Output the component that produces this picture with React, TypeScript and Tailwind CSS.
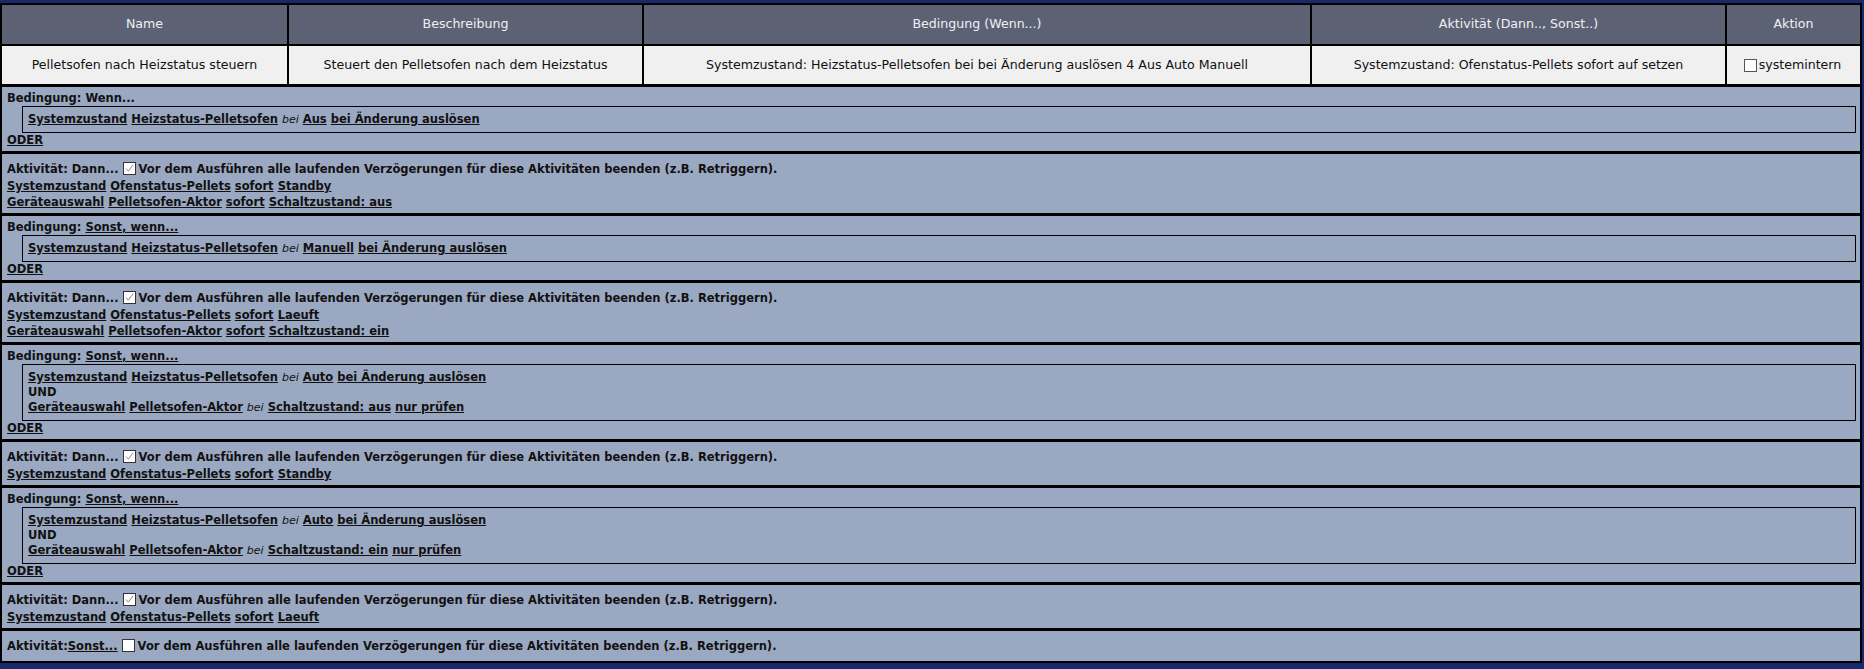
import React from 'react';

type Tok = { t: string; i?: boolean };

const L = (t: string): Tok => ({ t });
const bei: Tok = { t: 'bei', i: true };

type Section =
  | { kind: 'cond'; link?: string; rows: Tok[][] }
  | { kind: 'act'; link?: string; checked: boolean; lines: Tok[][] };

const sections: Section[] = [
  {
    kind: 'cond',
    rows: [[L('Systemzustand'), L('Heizstatus-Pelletsofen'), bei, L('Aus'), L('bei Änderung auslösen')]],
  },
  {
    kind: 'act',
    checked: true,
    lines: [
      [L('Systemzustand'), L('Ofenstatus-Pellets'), L('sofort'), L('Standby')],
      [L('Geräteauswahl'), L('Pelletsofen-Aktor'), L('sofort'), L('Schaltzustand: aus')],
    ],
  },
  {
    kind: 'cond',
    link: 'Sonst, wenn...',
    rows: [[L('Systemzustand'), L('Heizstatus-Pelletsofen'), bei, L('Manuell'), L('bei Änderung auslösen')]],
  },
  {
    kind: 'act',
    checked: true,
    lines: [
      [L('Systemzustand'), L('Ofenstatus-Pellets'), L('sofort'), L('Laeuft')],
      [L('Geräteauswahl'), L('Pelletsofen-Aktor'), L('sofort'), L('Schaltzustand: ein')],
    ],
  },
  {
    kind: 'cond',
    link: 'Sonst, wenn...',
    rows: [
      [L('Systemzustand'), L('Heizstatus-Pelletsofen'), bei, L('Auto'), L('bei Änderung auslösen')],
      [L('Geräteauswahl'), L('Pelletsofen-Aktor'), bei, L('Schaltzustand: aus'), L('nur prüfen')],
    ],
  },
  {
    kind: 'act',
    checked: true,
    lines: [[L('Systemzustand'), L('Ofenstatus-Pellets'), L('sofort'), L('Standby')]],
  },
  {
    kind: 'cond',
    link: 'Sonst, wenn...',
    rows: [
      [L('Systemzustand'), L('Heizstatus-Pelletsofen'), bei, L('Auto'), L('bei Änderung auslösen')],
      [L('Geräteauswahl'), L('Pelletsofen-Aktor'), bei, L('Schaltzustand: ein'), L('nur prüfen')],
    ],
  },
  {
    kind: 'act',
    checked: true,
    lines: [[L('Systemzustand'), L('Ofenstatus-Pellets'), L('sofort'), L('Laeuft')]],
  },
  { kind: 'act', link: 'Sonst...', checked: false, lines: [] },
];

function Box({ checked, grey }: { checked?: boolean; grey?: boolean }) {
  return (
    <span
      className={`inline-block w-[13px] h-[13px] bg-white border align-[-2px] ${
        grey ? 'border-[#555]' : 'border-[#333]'
      }`}
    >
      {checked && (
        <svg viewBox="0 0 11 11" className="w-[11px] h-[11px] block">
          <path d="M2 5.5 L4.3 8.2 L9.2 1.6" fill="none" stroke="#8a8a8a" strokeWidth="1" />
        </svg>
      )}
    </span>
  );
}

function Line({ toks, lh = 'leading-[15px]' }: { toks: Tok[]; lh?: string }) {
  return (
    <div className={`${lh} whitespace-nowrap`}>
      {toks.map((k, n) => (
        <React.Fragment key={n}>
          {n > 0 && ' '}
          {k.i ? (
            <i className="font-normal text-[11px]">{k.t}</i>
          ) : (
            <span className="underline">{k.t}</span>
          )}
        </React.Fragment>
      ))}
    </div>
  );
}

const headers = ['Name', 'Beschreibung', 'Bedingung (Wenn...)', 'Aktivität (Dann.., Sonst..)', 'Aktion'];

export default function App() {
  return (
    <div className="min-h-[669px] bg-[#18296b] pt-[3px] pb-[8px] pr-[2px] [font-family:'DejaVu_Sans',sans-serif] text-[#111]">
      <div className="border-2 border-black bg-black flex flex-col">
        {/* header + summary row */}
        <div className="grid grid-cols-[285px_353px_666px_413px_1fr] gap-[2px] text-[12.6px]">
          {headers.map((h) => (
            <div key={h} className="h-[39px] bg-[#5c6274] text-[#eef0f4] flex items-center justify-center">
              {h}
            </div>
          ))}
          <div className="h-[38px] bg-[#f0f0f0] flex items-center justify-center">Pelletsofen nach Heizstatus steuern</div>
          <div className="h-[38px] bg-[#f0f0f0] flex items-center justify-center">Steuert den Pelletsofen nach dem Heizstatus</div>
          <div className="h-[38px] bg-[#f0f0f0] flex items-center justify-center">
            Systemzustand: Heizstatus-Pelletsofen bei bei Änderung auslösen 4 Aus Auto Manuell
          </div>
          <div className="h-[38px] bg-[#f0f0f0] flex items-center justify-center">
            Systemzustand: Ofenstatus-Pellets sofort auf setzen
          </div>
          <div className="h-[38px] bg-[#f0f0f0] flex items-center justify-center gap-[2px] pr-[2px]">
            <Box grey />
            <span>systemintern</span>
          </div>
        </div>

        {/* rule sections */}
        <div className="mt-[3px] flex flex-col gap-[3px] text-[11.5px] font-bold">
          {sections.map((s, idx) =>
            s.kind === 'cond' ? (
              <div key={idx} className="bg-[#9aa8c1] pl-[5px] pr-[4px] pt-[4px] pb-[3px]">
                <div className="leading-[15px]">
                  Bedingung: {s.link ? <span className="underline">{s.link}</span> : 'Wenn...'}
                </div>
                <div className="ml-[15px] border border-black px-[5px] py-[5px]">
                  {s.rows.map((r, n) => (
                    <React.Fragment key={n}>
                      {n > 0 && <div className="leading-[15px]">UND</div>}
                      <Line toks={r} />
                    </React.Fragment>
                  ))}
                </div>
                <div className="leading-[15px] underline">ODER</div>
              </div>
            ) : (
              <div
                key={idx}
                className={`bg-[#9aa8c1] pl-[5px] pt-[6px] ${s.lines.length ? 'pb-[3px]' : 'pb-[6px]'}`}
              >
                <div className="leading-[18px] whitespace-nowrap">
                  Aktivität:{s.link ? <span className="underline">{s.link}</span> : ' Dann...'}
                  <span className="ml-[4px] mr-[3px]">
                    <Box checked={s.checked} />
                  </span>
                  Vor dem Ausführen alle laufenden Verzögerungen für diese Aktivitäten beenden (z.B. Retriggern).
                </div>
                {s.lines.map((l, n) => (
                  <Line key={n} toks={l} lh="leading-[16px]" />
                ))}
              </div>
            )
          )}
        </div>
      </div>
    </div>
  );
}
